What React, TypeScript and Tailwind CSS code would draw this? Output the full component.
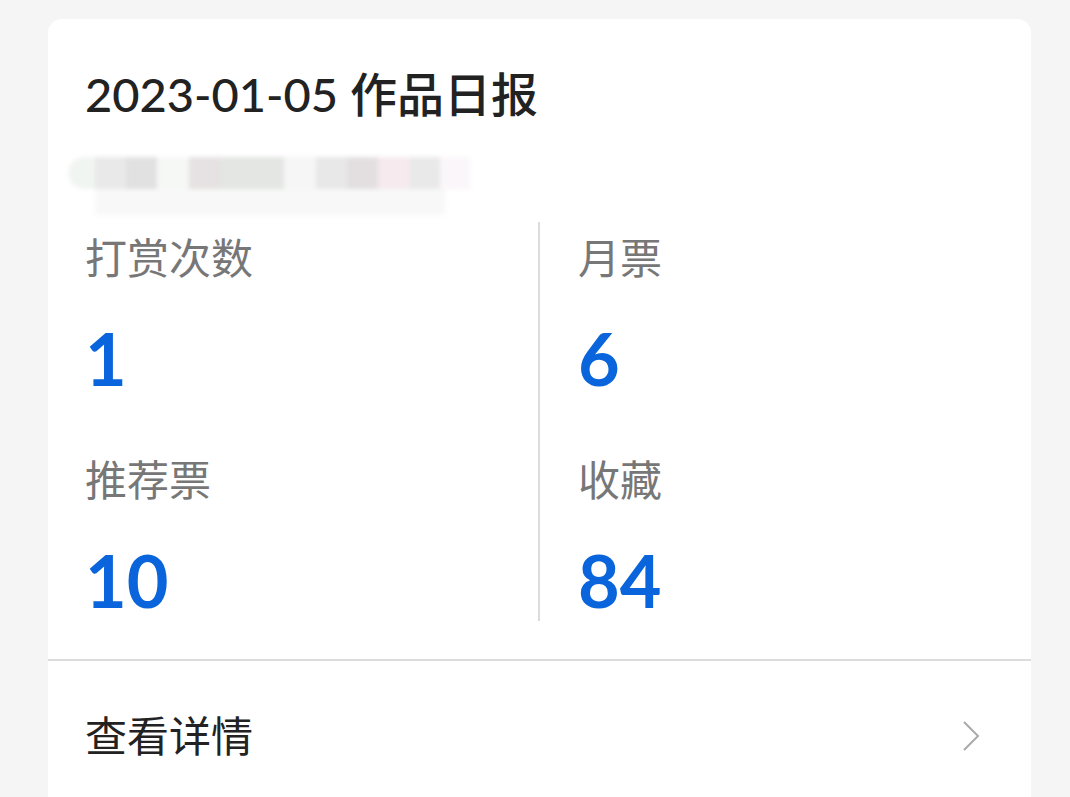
export default function App() {
  const stats = [
    [
      { label: "打赏次数", value: "1" },
      { label: "推荐票", value: "10" },
    ],
    [
      { label: "月票", value: "6" },
      { label: "收藏", value: "84" },
    ],
  ];

  const font = { fontFamily: 'Lato, "Noto Sans CJK SC", sans-serif' };

  return (
    <div className="min-h-[797px] bg-[#f5f5f5] pt-[19px] pl-[48px]" style={font}>
      <div className="w-[983px] h-[800px] rounded-[14px] bg-white flex flex-col">
        {/* title */}
        <div className="pt-[47px] px-[37px] text-[47px] leading-[56px] font-medium text-[#222]">
          2023-01-05 作品日报
        </div>

        {/* redacted subtitle */}
        <div className="h-[100px] pl-[20px] pt-[35px]">
          <div className="flex flex-col blur-[2px] w-[410px]">
            <div className="flex h-[32px]">
              <div className="w-[27px] bg-[#f1f5f2] rounded-l-full" />
              <div className="w-[31px] bg-[#e9e9e9]" />
              <div className="w-[31px] bg-[#e1e1e1]" />
              <div className="w-[32px] bg-[#f6f8f6]" />
              <div className="w-[31px] bg-[#e6e1e2]" />
              <div className="w-[64px] bg-[#e3e6e3]" />
              <div className="w-[32px] bg-[#f5f6f5]" />
              <div className="w-[31px] bg-[#e8e8e8]" />
              <div className="w-[31px] bg-[#e3dfe0]" />
              <div className="w-[32px] bg-[#f6eaef]" />
              <div className="w-[30px] bg-[#e9e9e9]" />
              <div className="w-[30px] bg-[#fbf6f9]" />
            </div>
            <div className="ml-[27px] w-[350px] h-[26px] bg-[#f7f8f7]" />
          </div>
        </div>

        {/* stats */}
        <div className="flex px-[37px]">
          {stats.map((col, i) => (
            <div
              key={i}
              className={
                i === 0
                  ? "w-[455px] border-r-2 border-[#dcdcdc] pt-[11px] pb-[1px] flex flex-col gap-[57px]"
                  : "flex-1 pl-[38px] pt-[11px] pb-[1px] flex flex-col gap-[57px]"
              }
            >
              {col.map((s) => (
                <div key={s.label} className="flex flex-col">
                  <div className="text-[42px] leading-[50px] text-[#777]">{s.label}</div>
                  <div className="mt-[35px] text-[72px] leading-[80px] font-bold text-[#0a64dc]">
                    {s.value}
                  </div>
                </div>
              ))}
            </div>
          ))}
        </div>

        <div className="mt-[38px] h-[2px] bg-[#dcdcdc]" />

        {/* details row */}
        <div className="flex items-center justify-between pl-[37px] pr-[51px] h-[150px]">
          <span className="text-[42px] leading-[50px] text-[#222]">查看详情</span>
          <svg width="18" height="30" viewBox="0 0 18 30" fill="none">
            <polyline points="2,1 16,15 2,29" stroke="#aaaaaa" strokeWidth="2" />
          </svg>
        </div>
      </div>
    </div>
  );
}
